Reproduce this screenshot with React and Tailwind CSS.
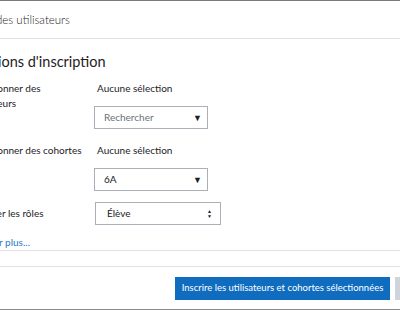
export default function App() {
  const font = { fontFamily: 'Lato, "Noto Sans", sans-serif' };
  return (
    <div className="w-[400px] h-[311px] overflow-hidden bg-white relative text-[#1d2125]" style={font}>
      <div className="h-px bg-[#7a7a7a]" />
      <div className="h-[38px] flex items-center border-b border-[#dee2e6]">
        <div className="-ml-[43px] text-[11.5px] font-light text-[#1d2125] whitespace-nowrap">Inscrire des utilisateurs</div>
      </div>
      <div className="pt-[12px]">
        <div className="-ml-[27px] text-[14.5px] leading-[22px] whitespace-nowrap">Options d'inscription</div>
        <div className="mt-[8px] -ml-[32px] flex flex-col text-[10px]">
          <div className="flex">
            <div className="w-[124px] leading-[15px]">Sélectionner des<br />utilisateurs</div>
            <div className="ml-[2px] flex flex-col">
              <div className="leading-[15px] pl-[3px]">Aucune sélection</div>
              <div className="mt-[10px] w-[114px] h-[23px] border border-[#aab0b8] flex items-center justify-between pl-[9px] pr-[5px] text-[#6a737b]">
                <span>Rechercher</span>
                <span className="text-[9px] text-[#1d2125]">▼</span>
              </div>
            </div>
          </div>
          <div className="flex mt-[14px]">
            <div className="w-[124px] leading-[15px] whitespace-nowrap">Sélectionner des cohortes</div>
            <div className="ml-[2px] flex flex-col">
              <div className="leading-[15px] pl-[3px]">Aucune sélection</div>
              <div className="mt-[10px] w-[114px] h-[23px] border border-[#aab0b8] flex items-center justify-between pl-[9px] pr-[5px]">
                <span>6A</span>
                <span className="text-[9px]">▼</span>
              </div>
            </div>
          </div>
          <div className="flex mt-[11px] items-center">
            <div className="w-[124px] leading-[15px]">Assigner les rôles</div>
            <div className="ml-[3px] w-[126px] h-[23px] border border-[#aab0b8] flex items-center justify-between pl-[11px] pr-[8px]">
              <span>Élève</span>
              <span className="text-[5px] leading-[5px] flex flex-col items-center"><span>▲</span><span>▼</span></span>
            </div>
          </div>
          <div className="mt-[10px] text-[#1f7ac8] leading-[15px]">Afficher plus...</div>
        </div>
        <div className="mt-[0px] h-px bg-[#dee2e6]" />
        <div className="mt-[15px] h-px bg-[#dee2e6]" />
        <div className="flex mt-[10px] items-center">
          <div className="ml-[175px] w-[215px] h-[23px] shrink-0 bg-[#0f6cbf] text-white text-[9.5px] flex items-center justify-center whitespace-nowrap">Inscrire les utilisateurs et cohortes sélectionnées</div>
          <div className="ml-[5px] w-[20px] h-[23px] shrink-0 bg-[#ced4da]" />
        </div>
      </div>
      <div className="absolute left-0 right-0 bottom-[1px] h-px bg-[#8a8a8a]" />
    </div>
  );
}
